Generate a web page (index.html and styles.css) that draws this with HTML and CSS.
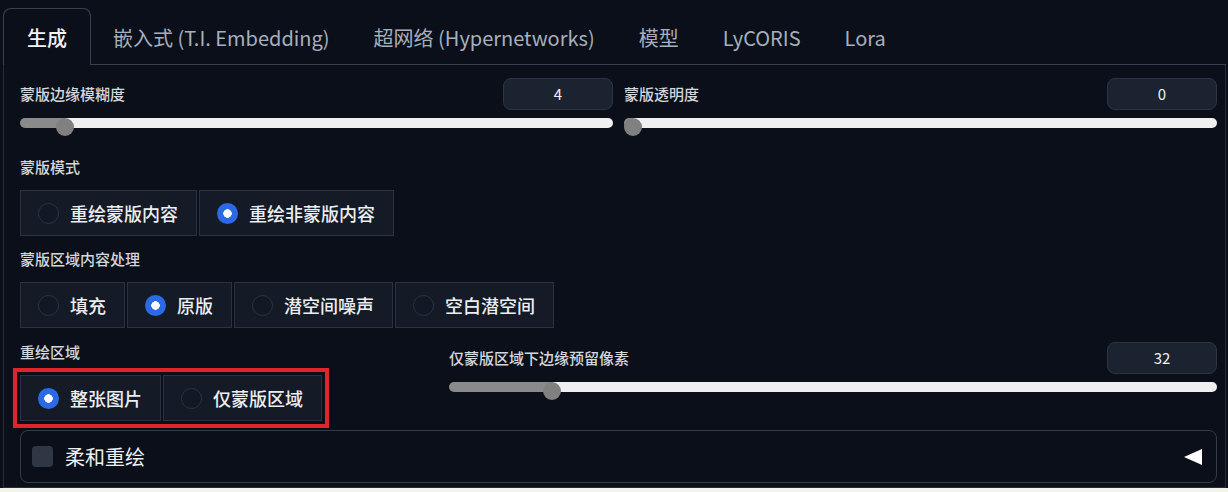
FILE: index.html
```html
<!DOCTYPE html>
<html lang="zh-CN">
<head>
    <meta charset="UTF-8">
    <meta name="viewport" content="width=device-width, initial-scale=1.0">
    <title>局部重绘</title>
    <link rel="stylesheet" href="styles.css">
</head>
<body>
    <div class="app">
        <div class="tab-nav">
            <button class="tab selected">生成</button>
            <button class="tab">嵌入式 (T.I. Embedding)</button>
            <button class="tab">超网络 (Hypernetworks)</button>
            <button class="tab">模型</button>
            <button class="tab">LyCORIS</button>
            <button class="tab">Lora</button>
        </div>

        <div class="panel">
            <div class="row row-sliders">
                <div class="slider-field">
                    <div class="field-head">
                        <span class="label">蒙版边缘模糊度</span>
                        <div class="num">4</div>
                    </div>
                    <div class="slider" style="--p: 0.0625">
                        <div class="slider-track"></div>
                        <div class="slider-thumb"></div>
                    </div>
                </div>
                <div class="slider-field">
                    <div class="field-head">
                        <span class="label">蒙版透明度</span>
                        <div class="num">0</div>
                    </div>
                    <div class="slider" style="--p: 0">
                        <div class="slider-track"></div>
                        <div class="slider-thumb"></div>
                    </div>
                </div>
            </div>

            <div class="field field-mode">
                <div class="label">蒙版模式</div>
                <div class="radio-group">
                    <label class="radio"><span class="dot"></span>重绘蒙版内容</label>
                    <label class="radio checked"><span class="dot"></span>重绘非蒙版内容</label>
                </div>
            </div>

            <div class="field field-fill">
                <div class="label">蒙版区域内容处理</div>
                <div class="radio-group">
                    <label class="radio"><span class="dot"></span>填充</label>
                    <label class="radio checked"><span class="dot"></span>原版</label>
                    <label class="radio"><span class="dot"></span>潜空间噪声</label>
                    <label class="radio"><span class="dot"></span>空白潜空间</label>
                </div>
            </div>

            <div class="row row-area">
                <div class="field">
                    <div class="label">重绘区域</div>
                    <div class="radio-group marked">
                        <label class="radio checked"><span class="dot"></span>整张图片</label>
                        <label class="radio"><span class="dot"></span>仅蒙版区域</label>
                    </div>
                </div>
                <div class="slider-field">
                    <div class="field-head">
                        <span class="label">仅蒙版区域下边缘预留像素</span>
                        <div class="num">32</div>
                    </div>
                    <div class="slider" style="--p: 0.125">
                        <div class="slider-track"></div>
                        <div class="slider-thumb"></div>
                    </div>
                </div>
            </div>

            <div class="accordion">
                <span class="checkbox"></span>
                <span class="acc-label">柔和重绘</span>
                <svg class="acc-icon" width="18" height="16" viewBox="0 0 18 16">
                    <polygon points="18,0 18,16 0,8" fill="#ffffff"/>
                </svg>
            </div>
        </div>
    </div>
</body>
</html>
```

FILE: styles.css
```css
* {
    margin: 0;
    padding: 0;
    box-sizing: border-box;
}

body {
    font-family: "Noto Sans CJK SC", "Noto Sans", sans-serif;
    background: #f3f3ee;
    width: 1228px;
    height: 492px;
    overflow: hidden;
}

.app {
    height: 488px;
    background: #0b0f19;
    padding: 8px 2px 0 3px;
    display: flex;
    flex-direction: column;
}

/* tabs */
.tab-nav {
    display: flex;
    border-bottom: 1px solid #374151;
}

.tab {
    font: inherit;
    font-size: 20px;
    color: #a7afbd;
    background: none;
    border: 1px solid transparent;
    border-bottom: none;
    padding: 0 21px;
    height: 57px;
    line-height: 58px;
    margin-bottom: -1px;
    cursor: pointer;
}

.tab.selected {
    color: #f2f3f5;
    font-weight: 500;
    background: #0b0f19;
    border-color: #374151;
    border-radius: 8px 8px 0 0;
    padding: 0 23px;
}

/* panel */
.panel {
    flex: 1;
    border: 1px solid #262d3a;
    border-top: none;
    padding: 13px 8px 0 16px;
}

.row {
    display: grid;
    gap: 11px;
}

.row-sliders {
    grid-template-columns: 1fr 1fr;
}

.row-area {
    grid-template-columns: 418px 1fr;
    margin-top: 14px;
}

.label {
    font-size: 15px;
    font-weight: 500;
    line-height: 20px;
    color: #d4d7dd;
}

.field .label {
    margin-bottom: 13px;
}

.field-mode {
    margin-top: 21px;
}

.field-fill {
    margin-top: 13px;
}

/* sliders */
.field-head {
    display: flex;
    justify-content: space-between;
    align-items: center;
}

.num {
    width: 110px;
    height: 32px;
    line-height: 30px;
    text-align: center;
    font-size: 15px;
    color: #eef0f3;
    background: #1b2331;
    border: 1px solid #2c3545;
    border-radius: 8px;
}

.slider {
    position: relative;
    height: 18px;
    margin-top: 8px;
}

.slider-track {
    height: 10px;
    margin-top: 4px;
    border-radius: 5px;
    background: linear-gradient(to right,
        #8a8a8a calc(var(--p) * (100% - 18px) + 9px),
        #efefef 0);
}

.slider-thumb {
    position: absolute;
    top: 0;
    left: calc(var(--p) * (100% - 18px));
    width: 18px;
    height: 18px;
    border-radius: 50%;
    background: #808080;
}

/* radio groups */
.radio-group {
    display: inline-flex;
    gap: 2px;
}

.radio-group.marked {
    outline: 4px solid #e0252a;
    outline-offset: 3px;
}

.radio {
    display: flex;
    align-items: center;
    gap: 11px;
    height: 46px;
    padding: 0 18px 0 17px;
    background: #141a26;
    border: 1px solid #2a3140;
    font-size: 18px;
    font-weight: 500;
    color: #eceef1;
    cursor: pointer;
}

.dot {
    width: 21px;
    height: 21px;
    border-radius: 50%;
    border: 1.5px solid #2c3443;
    background: #121824;
    flex-shrink: 0;
}

.radio.checked .dot {
    border: none;
    background: radial-gradient(circle, #ffffff 0 4px, #2b6ae6 4.5px);
}

/* accordion */
.accordion {
    display: flex;
    align-items: center;
    height: 53px;
    margin-top: 9px;
    padding: 0 14px 0 11px;
    border: 1px solid #333b49;
    border-radius: 8px;
}

.checkbox {
    width: 21px;
    height: 21px;
    border-radius: 4px;
    background: #2f3745;
}

.acc-label {
    margin-left: 12px;
    font-size: 20px;
    color: #eef0f3;
    flex: 1;
}
```
